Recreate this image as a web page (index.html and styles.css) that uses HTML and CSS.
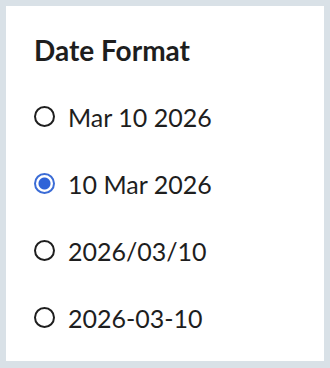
FILE: index.html
```html
<!DOCTYPE html>
<html>
<head>
<meta charset="utf-8">
<link rel="stylesheet" href="styles.css">
</head>
<body>
<div class="card">
  <h1 class="title">Date Format</h1>
  <label class="option"><input type="radio" name="fmt" class="radio"><span>Mar 10 2026</span></label>
  <label class="option"><input type="radio" name="fmt" class="radio" checked><span>10 Mar 2026</span></label>
  <label class="option"><input type="radio" name="fmt" class="radio"><span>2026/03/10</span></label>
  <label class="option"><input type="radio" name="fmt" class="radio"><span>2026-03-10</span></label>
</div>
</body>
</html>
```
FILE: styles.css
```css
html, body {
  margin: 0;
  padding: 0;
  background: #d9e1e7;
}
body {
  padding: 6px;
  width: 330px;
  height: 368px;
  box-sizing: border-box;
  font-family: Lato, "Noto Sans", sans-serif;
  color: #1e1e1e;
}
.card {
  background: #ffffff;
  height: 355px;
  padding: 28px 28px 0 28px;
  box-sizing: border-box;
  display: flex;
  flex-direction: column;
}
.title {
  margin: 0 0 17px 0;
  font-size: 28px;
  font-weight: 700;
  line-height: 32px;
}
.option {
  display: flex;
  align-items: center;
  gap: 13px;
  height: 67px;
  font-size: 25px;
}
.radio {
  appearance: none;
  -webkit-appearance: none;
  margin: 0;
  width: 21px;
  height: 21px;
  border: 2px solid #1e1e1e;
  border-radius: 50%;
  box-sizing: border-box;
  flex: none;
}
.radio:checked {
  border-color: #3b6cd6;
  background: radial-gradient(circle, #2f63d8 0 5.5px, #ffffff 6.5px);
}
```
